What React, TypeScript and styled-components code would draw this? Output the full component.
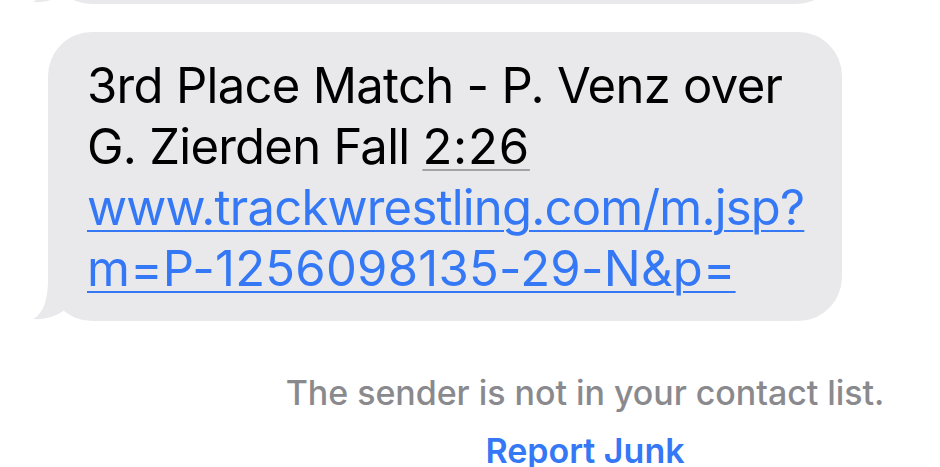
import React from "react";
import styled, { createGlobalStyle } from "styled-components";

const GlobalStyle = createGlobalStyle`
  html, body {
    margin: 0;
    padding: 0;
    background: #ffffff;
    overflow: hidden;
  }
  body {
    font-family: Inter, "Noto Sans", "Liberation Sans", sans-serif;
    -webkit-font-smoothing: antialiased;
  }
`;

const Page = styled.div`
  width: 940px;
  height: 467px;
  display: flex;
  flex-direction: column;
  overflow: hidden;
`;

const BubbleRow = styled.div<{ $top?: number; $right: number }>`
  display: flex;
  padding-left: 48px;
  margin-top: ${(p) => p.$top ?? 0}px;
  width: ${(p) => p.$right - 48}px;
`;

const Bubble = styled.div<{ $height?: number }>`
  position: relative;
  flex: 1;
  background: #e9e9eb;
  border-radius: 44px;
  box-sizing: border-box;
  padding: 23px 0 22px 39px;
  ${(p) => (p.$height ? `height: ${p.$height}px;` : "")}
  color: #000;
  font-size: 49px;
  line-height: 61px;
  white-space: nowrap;
`;

const Tail = styled.svg`
  position: absolute;
  left: -16px;
  bottom: 0;
  width: 64px;
  height: 52px;
  display: block;
`;

const Line = styled.div<{ $spacing: number }>`
  position: relative;
  letter-spacing: ${(p) => p.$spacing}px;
`;

const Duration = styled.span`
  letter-spacing: 0.8px;
  text-decoration: underline;
  text-decoration-color: #a3a3a6;
  text-decoration-thickness: 2px;
  text-underline-offset: 5px;
`;

const Link = styled.a`
  color: #3478f6;
  text-decoration: underline;
  text-decoration-thickness: 2px;
  text-underline-offset: 5px;
`;

const Footer = styled.div`
  display: flex;
  flex-direction: column;
  align-items: center;
  padding-left: 230px;
  margin-top: 51px;
  font-size: 34px;
  line-height: 41px;
`;

const Notice = styled.div`
  color: #8a8a8e;
  font-weight: 500;
  letter-spacing: -0.05px;
`;

const Action = styled.div`
  margin-top: 17px;
  color: #3478f6;
  font-weight: 600;
`;

const BubbleTail = () => (
  <Tail viewBox="0 0 64 52" aria-hidden="true">
    <path
      d="M16 0 L16 10 C16 30 12 44 1 50 C13 51 25 47 34 40 C40 46 48 51 63 51 L63 0 Z"
      fill="#e9e9eb"
    />
  </Tail>
);

export default function App() {
  return (
    <>
      <GlobalStyle />
      <Page>
        <BubbleRow $top={-96} $right={840}>
          <Bubble $height={100}>
            <BubbleTail />
          </Bubble>
        </BubbleRow>
        <BubbleRow $top={28} $right={842}>
          <Bubble>
            <BubbleTail />
            <Line $spacing={-0.7}>3rd Place Match - P. Venz over</Line>
            <Line $spacing={-0.75}>
              G. Zierden Fall <Duration>2:26</Duration>
            </Line>
            <Line $spacing={-0.8}>
              <Link>www.trackwrestling.com/m.jsp?</Link>
            </Line>
            <Line $spacing={0.25}>
              <Link>m=P-1256098135-29-N&amp;p=</Link>
            </Line>
          </Bubble>
        </BubbleRow>
        <Footer>
          <Notice>The sender is not in your contact list.</Notice>
          <Action>Report Junk</Action>
        </Footer>
      </Page>
    </>
  );
}
